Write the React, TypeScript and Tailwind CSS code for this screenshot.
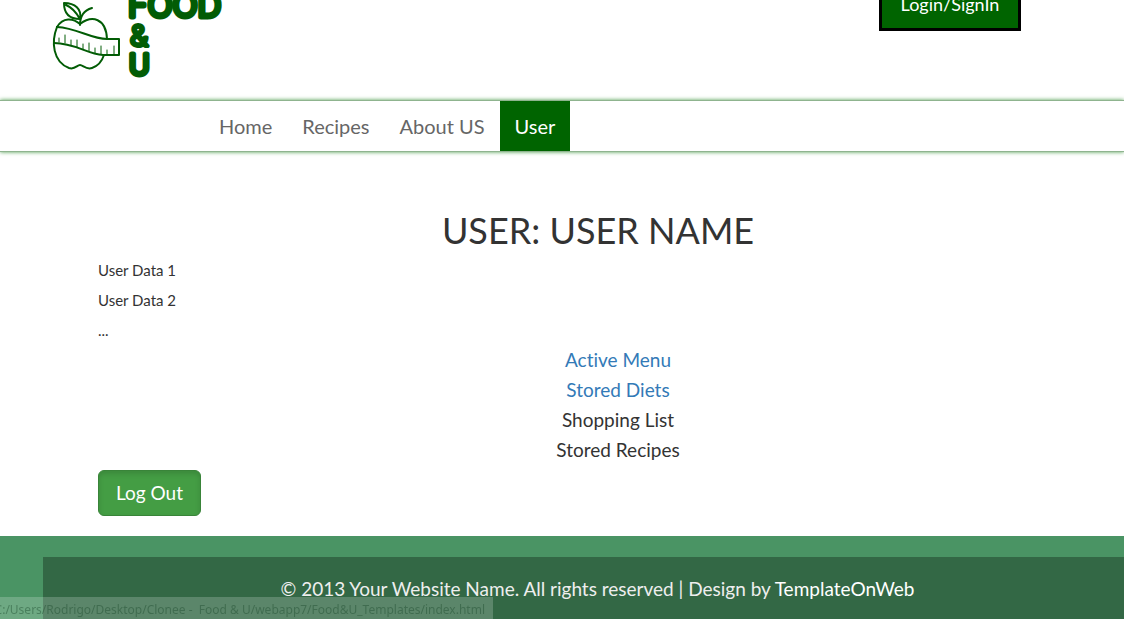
const navItems = ["Home", "Recipes", "About US"];

function Logo() {
  return (
    <svg viewBox="0 0 180 90" className="ml-[50px] h-[90px] w-[180px] shrink-0" role="img" aria-label="Food & U">
      <g fill="none" stroke="#025c05" strokeWidth="2" strokeLinecap="round" strokeLinejoin="round">
        <path d="M30 25 C30 15 35 10 42 8" />
        <path d="M30 19 C18 19 14 12 14 3 C25 3 32 9 30 19 M16 5 C21 7 26 12 30 19" />
        <path d="M7 27 C13 17 23 18 30 24 C42 15 56 18 57 39" />
        <path d="M7 27 C1 42 3 62 19 68 C25 70 27 65 30 65 C33 65 36 70 42 68 C48 66 52 61 54 55" />
        <path d="M7 27 C27 28 41 39 57 39 H69 V55 H53 C37 54 25 43 4 43" />
        <path strokeWidth="1" d="M9 42 V38 M15 43 V35 M21 45 V40 M27 47 V40 M33 49 V44 M39 51 V43 M45 53 V48 M51 54 V46 M57 54 V50 M64 54 V46" />
      </g>
      <g
        fill="#025c05"
        stroke="#025c05"
        strokeWidth="5"
        strokeLinejoin="round"
        fontFamily="Inter, sans-serif"
        fontSize="33"
        fontWeight="300"
      >
        <text x="78" y="17">FOOD</text>
        <text x="80" y="46" strokeWidth="4" fontSize="29">&amp;</text>
        <text x="79" y="75" fontSize="28">U</text>
      </g>
    </svg>
  );
}

export default function App() {
  return (
    <div className="flex min-h-screen flex-col overflow-hidden bg-white font-['Lato','Open_Sans',sans-serif] text-[#333] [font-variant-ligatures:none]">
      <header className="flex items-start justify-between pb-[10px] pr-[103px]">
        <Logo />
        <button type="button" className="-mt-[24px] h-[55px] w-[142px] border-[3px] border-black bg-[#006400] text-[18px] leading-6 text-white">
          Login/SignIn
        </button>
      </header>

      <nav className="border-y border-[#8fb48f] pl-[204px] shadow-[0_0_4px_#4a9a4a]">
        <ul className="flex text-[20px] leading-[50px] text-[#666]">
          {navItems.map((item) => (
            <li key={item}>
              <a href="#" className="block px-[15px]">{item}</a>
            </li>
          ))}
          <li>
            <a href="#" aria-current="page" className="block bg-[#006400] px-[15px] text-white">User</a>
          </li>
        </ul>
      </nav>

      <main className="pb-5 pl-[98px] pr-[26px] pt-[58px]">
        <h1 className="text-center text-[36px] leading-10">USER: USER NAME</h1>
        <div className="pt-[5px] text-[15px] leading-[30px]">
          <p>User Data 1</p>
          <p>User Data 2</p>
          <p>...</p>
        </div>
        <ul className="pl-10 text-center text-[19px] leading-[30px]">
          <li><a href="#" className="text-[#337ab7]">Active Menu</a></li>
          <li><a href="#" className="text-[#337ab7]">Stored Diets</a></li>
          <li>Shopping List</li>
          <li>Stored Recipes</li>
        </ul>
        <button type="button" className="mt-[5px] h-[46px] rounded-md border border-[#398439] bg-[#449d44] px-[17px] text-[19px] leading-6 text-white shadow-[inset_0_3px_5px_rgba(0,0,0,0.125)]">
          Log Out
        </button>
      </main>

      <footer className="flex flex-1 flex-col bg-[#4a9464] pl-[43px] pt-[21px]">
        <div className="flex-1 bg-[#336845] pl-7 pt-5 text-center text-[19px] leading-6 text-[#eee]">
          © 2013 Your Website Name. All rights reserved | Design by{" "}
          <a href="#" className="text-white">TemplateOnWeb</a>
        </div>
      </footer>

      <div className="fixed bottom-0 left-0 flex h-[22px] w-[493px] justify-end overflow-hidden whitespace-nowrap bg-white/20 pr-2 font-['Noto_Sans',sans-serif] text-[12px] leading-[25px] text-[#204d30]/45">
        C:/Users/Rodrigo/Desktop/Clonee -&nbsp; Food &amp; U/webapp7/Food&amp;U_Templates/index.html
      </div>
    </div>
  );
}
